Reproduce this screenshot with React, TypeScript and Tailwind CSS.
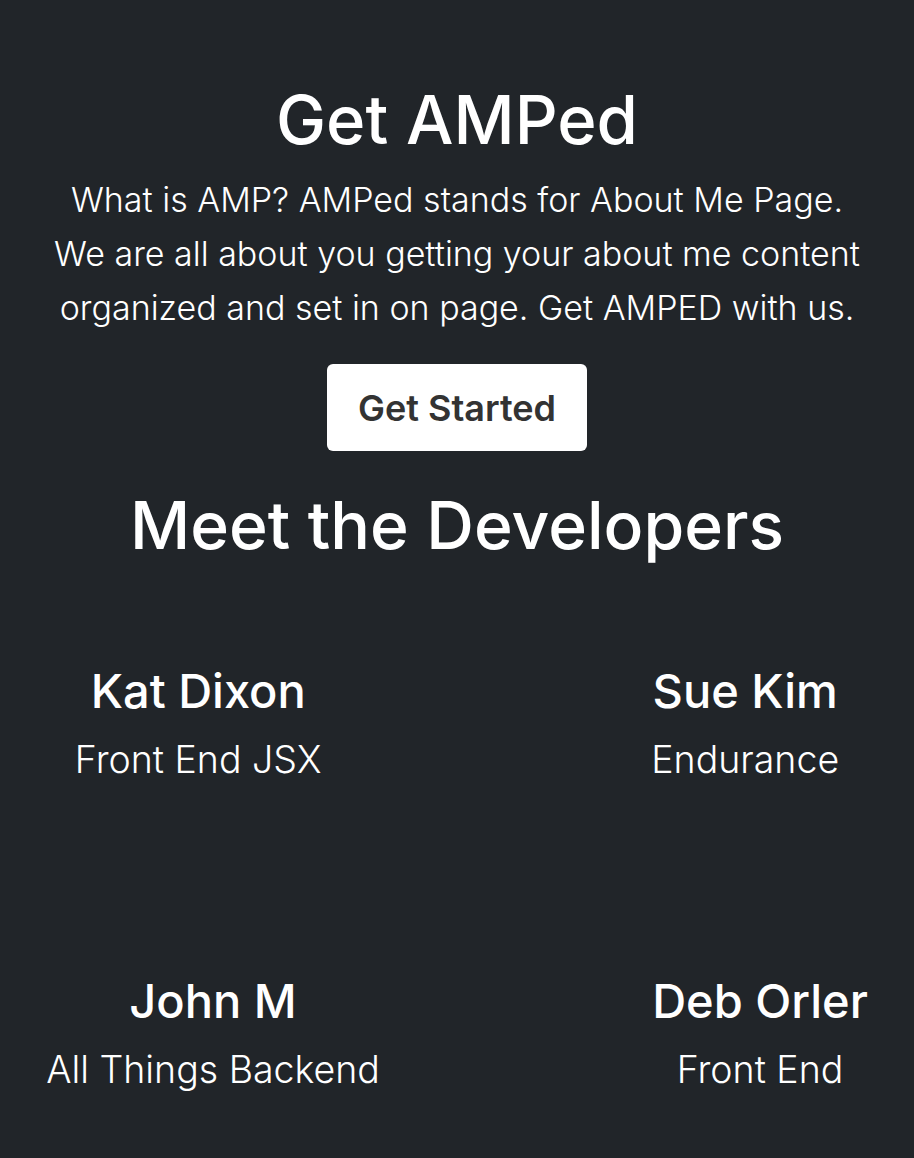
import React from "react";

const devs = [
  [
    { name: "Kat Dixon", role: "Front End JSX" },
    { name: "Sue Kim", role: "Endurance" },
  ],
  [
    { name: "John M", role: "All Things Backend" },
    { name: "Deb Orler", role: "Front End" },
  ],
];

export default function App() {
  return (
    <div
      className="min-h-[1158px] w-full overflow-hidden bg-[#212529] text-white"
      style={{ fontFamily: "Inter, 'Noto Sans', sans-serif" }}
    >
      <section className="flex flex-col items-center pt-[80px] text-center">
        <h1 className="text-[67px] font-medium leading-[1.2]">Get AMPed</h1>
        <p className="mt-[13px] text-[34px] font-light leading-[54px]">
          What is AMP? AMPed stands for About Me Page.
          <br />
          We are all about you getting your about me content
          <br />
          organized and set in on page. Get AMPED with us.
        </p>
        <button className="mt-[29px] h-[87px] w-[260px] rounded-[6px] bg-white text-[36px] font-semibold text-[#333]">
          Get Started
        </button>
        <h2 className="mt-[35px] text-[66px] font-medium leading-[1.2]">Meet the Developers</h2>
      </section>
      <section className="-mx-[90px] mt-[97px] flex flex-col pb-[40px]">
        {devs.map((row, i) => (
          <div key={i} className={i === 0 ? "flex h-[310px] justify-around" : "flex justify-around"}>
            {row.map((d) => (
              <div key={d.name} className="flex flex-col items-center text-center">
                <h3 className="text-[47px] font-medium leading-[1.2]">{d.name}</h3>
                <p className="mt-[18px] text-[37.5px] font-light leading-[1.2]">{d.role}</p>
              </div>
            ))}
          </div>
        ))}
      </section>
    </div>
  );
}
